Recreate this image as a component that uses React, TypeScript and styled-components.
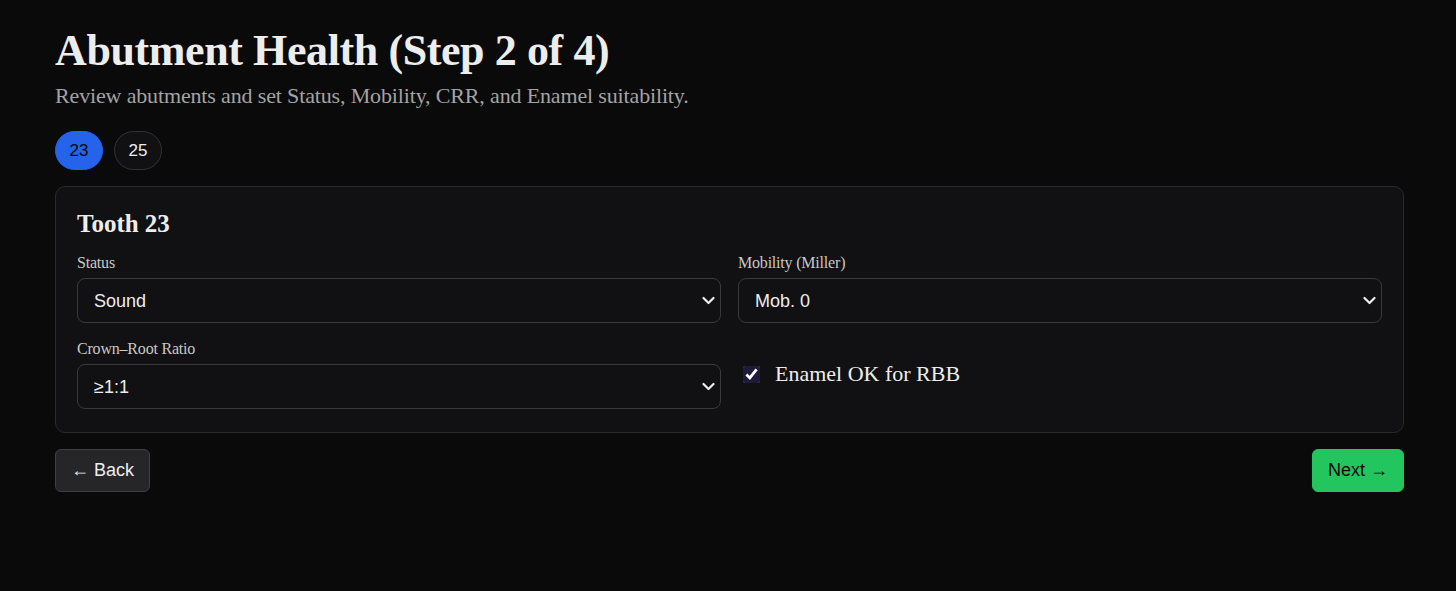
import styled, { createGlobalStyle } from "styled-components";

const GlobalStyle = createGlobalStyle`
  html, body {
    margin: 0;
    background: #0a0a0a;
    color: #ededed;
    color-scheme: dark;
    font-family: "Liberation Serif", "Times New Roman", serif;
  }
`;

const teeth = ["23", "25"];

const chevron =
  "data:image/svg+xml;utf8," +
  encodeURIComponent(
    '<svg xmlns="http://www.w3.org/2000/svg" width="13" height="9" viewBox="0 0 13 9"><path d="M1.5 2l5 5 5-5" fill="none" stroke="#ededed" stroke-width="2.2" stroke-linecap="round" stroke-linejoin="round"/></svg>'
  );

const App: React.FC = () => {
  return (
    <>
      <GlobalStyle />
      <Page>
        <Title>Abutment Health (Step 2 of 4)</Title>
        <Subtitle>
          Review abutments and set Status, Mobility, CRR, and Enamel suitability.
        </Subtitle>
        <ChipRow>
          {teeth.map((t) => (
            <Chip key={t} $active={t === "23"}>
              {t}
            </Chip>
          ))}
        </ChipRow>
        <Card>
          <CardTitle>Tooth 23</CardTitle>
          <Grid>
            <Field>
              <Label>Status</Label>
              <Select defaultValue="sound">
                <option value="sound">Sound</option>
                <option value="restored">Restored</option>
                <option value="carious">Carious</option>
              </Select>
            </Field>
            <Field>
              <Label>Mobility (Miller)</Label>
              <Select defaultValue="0">
                <option value="0">Mob. 0</option>
                <option value="1">Mob. 1</option>
                <option value="2">Mob. 2</option>
              </Select>
            </Field>
            <Field>
              <Label>Crown–Root Ratio</Label>
              <Select defaultValue="ok">
                <option value="ok">≥1:1</option>
                <option value="low">&lt;1:1</option>
              </Select>
            </Field>
            <CheckRow>
              <Checkbox type="checkbox" defaultChecked />
              Enamel OK for RBB
            </CheckRow>
          </Grid>
        </Card>
        <Footer>
          <BackButton>← Back</BackButton>
          <NextButton>Next →</NextButton>
        </Footer>
      </Page>
    </>
  );
};

export default App;

const Page = styled.div`
  padding: 27px 52px 40px 55px;
`;

const Title = styled.h1`
  margin: 0;
  font-size: 44px;
  font-weight: 700;
  line-height: 48px;
  letter-spacing: -0.4px;
  color: #ededed;
`;

const Subtitle = styled.p`
  margin: 8px 0 0;
  font-size: 22px;
  line-height: 26px;
  letter-spacing: -0.15px;
  color: #a3a3a3;
`;

const ChipRow = styled.div`
  display: flex;
  gap: 11px;
  margin-top: 22px;
`;

const Chip = styled.button<{ $active?: boolean }>`
  height: 39px;
  min-width: 48px;
  padding: 0 12px;
  border-radius: 999px;
  border: 1px solid ${(p) => (p.$active ? "#2563eb" : "#333")};
  background: ${(p) => (p.$active ? "#2563eb" : "#111113")};
  color: ${(p) => (p.$active ? "#0a0a0a" : "#ededed")};
  font-family: "Liberation Sans", Arial, sans-serif;
  font-size: 17px;
`;

const Card = styled.section`
  margin-top: 16px;
  padding: 22px 21px 23px 21px;
  background: #111113;
  border: 1px solid #2a2a2e;
  border-radius: 10px;
`;

const CardTitle = styled.h2`
  margin: 0;
  font-size: 25px;
  line-height: 30px;
  font-weight: 700;
`;

const Grid = styled.div`
  display: grid;
  grid-template-columns: repeat(2, minmax(0, 1fr));
  column-gap: 17px;
  row-gap: 16px;
  margin-top: 14px;
`;

const Field = styled.label`
  display: flex;
  flex-direction: column;
  gap: 6px;
`;

const Label = styled.span`
  font-size: 16px;
  line-height: 19px;
  letter-spacing: -0.2px;
  color: #c8c8c8;
`;

const Select = styled.select`
  appearance: none;
  height: 45px;
  padding: 0 28px 0 16px;
  background: #111113 url("${chevron}") no-repeat right 5px center;
  color: #ededed;
  border: 1px solid #3a3a3e;
  border-radius: 8px;
  font-family: "Liberation Sans", Arial, sans-serif;
  font-size: 18px;
`;

const CheckRow = styled.label`
  display: flex;
  align-items: center;
  gap: 15px;
  align-self: center;
  padding-left: 5px;
  font-size: 22px;
  color: #ededed;
`;

const Checkbox = styled.input`
  width: 17px;
  height: 17px;
  margin: 0;
  accent-color: #1e1b3a;
`;

const Footer = styled.div`
  display: flex;
  justify-content: space-between;
  margin-top: 16px;
`;

const BaseButton = styled.button`
  height: 43px;
  padding: 0 15px;
  border-radius: 6px;
  font-family: "Liberation Sans", Arial, sans-serif;
  font-size: 18px;
`;

const BackButton = styled(BaseButton)`
  background: #262628;
  border: 1px solid #3f3f42;
  color: #ededed;
`;

const NextButton = styled(BaseButton)`
  background: #22c55e;
  border: 1px solid #22c55e;
  color: #0a0a0a;
`;
